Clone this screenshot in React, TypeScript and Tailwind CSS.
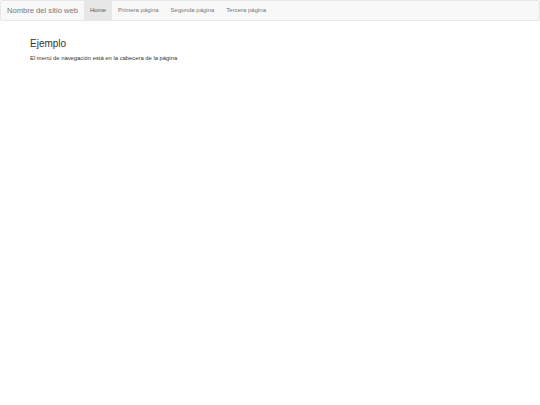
import React from "react";

export default function App() {
  const links = ["Primera página", "Segunda página", "Tercera página"];
  return (
    <div className="min-h-[405px] w-[540px] bg-white font-['Liberation_Sans',Arial,sans-serif]">
      <nav className="flex h-[21px] items-stretch rounded-[2px] border border-[#e7e7e7] bg-[#f8f8f8]">
        <div className="flex items-center px-[6px] text-[7.6px] text-[#777]">Nombre del sitio web</div>
        <div className="flex items-center bg-[#e7e7e7] px-[6px] text-[6px] text-[#555]">Home</div>
        {links.map((l) => (
          <div key={l} className="flex items-center px-[6px] text-[6px] text-[#777]">
            {l}
          </div>
        ))}
      </nav>
      <main className="px-[30px] pt-[16px]">
        <h1 className="text-[10px] leading-[14px] text-[#333]">Ejemplo</h1>
        <p className="mt-[3px] text-[5.85px] leading-[8px] text-[#333]">
          El menú de navegación está en la cabecera de la página
        </p>
      </main>
    </div>
  );
}
